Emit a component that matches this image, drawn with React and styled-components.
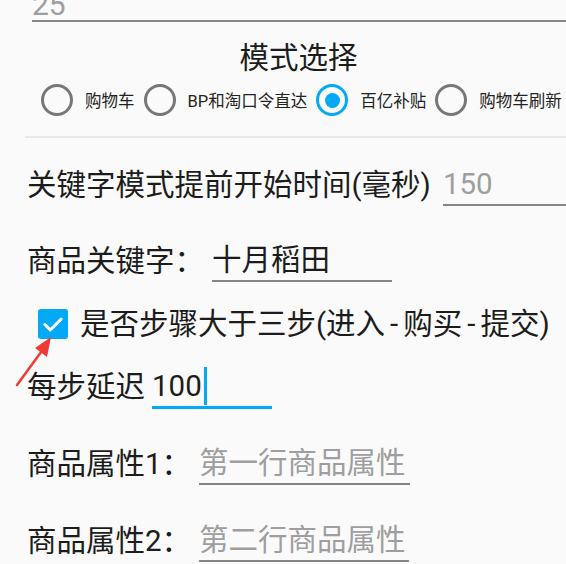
import React from "react";
import styled, { createGlobalStyle } from "styled-components";

const GlobalStyle = createGlobalStyle`
  html, body {
    margin: 0;
    padding: 0;
    background: #fafafa;
  }
  body {
    font-family: Roboto, "Noto Sans CJK SC", sans-serif;
    overflow: hidden;
  }
`;

const Page = styled.div`
  position: relative;
  display: flex;
  flex-direction: column;
  width: 566px;
  height: 564px;
  overflow: hidden;
  padding-left: 27px;
  box-sizing: border-box;
  background: #fafafa;
  color: #212121;
  & > * {
    flex: none;
  }
`;

const TopField = styled.div`
  margin: -20px 0 0 5px;
  height: 40px;
  line-height: 50px;
  font-size: 30px;
  color: #9e9e9e;
  border-bottom: 2px solid #858585;
`;

const Title = styled.h2`
  margin: 18px -4px 0 0;
  text-align: center;
  font-size: 29.5px;
  line-height: 36px;
  font-weight: normal;
  color: #1c1c1c;
`;

const RadioGroup = styled.div`
  display: flex;
  align-items: center;
  gap: 9px;
  margin: 8px 0 0 14px;
  height: 32px;
  white-space: nowrap;
`;

const RadioItem = styled.label`
  display: flex;
  align-items: center;
  gap: 12px;
  font-size: 16.5px;
  color: #222;
`;

const RadioCircle = styled.span`
  flex: none;
  width: 32px;
  height: 32px;
  box-sizing: border-box;
  border-radius: 50%;
  border: 3.5px solid ${(p) => (p.$checked ? "#03a9f4" : "#777")};
  display: flex;
  align-items: center;
  justify-content: center;
  &::after {
    content: "";
    width: 15px;
    height: 15px;
    border-radius: 50%;
    background: #03a9f4;
    display: ${(p) => (p.$checked ? "block" : "none")};
  }
`;

const Divider = styled.div`
  margin: 20px 0 0 -2px;
  height: 2px;
  background: #e8e8e8;
`;

const Row = styled.div`
  display: flex;
  align-items: center;
  gap: ${(p) => p.$gap ?? 8}px;
  margin-top: ${(p) => p.$top}px;
  height: 42px;
  font-size: 29.5px;
  white-space: nowrap;
`;

const Label = styled.span`
  color: #1c1c1c;
  line-height: 40px;
`;

const Dash = styled.span`
  margin: 0 5px;
`;

const Field = styled.div`
  flex: ${(p) => (p.$width ? "none" : "1")};
  width: ${(p) => (p.$width ? `${p.$width}px` : "auto")};
  height: 40px;
  line-height: 40px;
  color: ${(p) => (p.$hint ? "#9e9e9e" : "#1c1c1c")};
  border-bottom: ${(p) => (p.$focused ? "3px solid #03a9f4" : "2px solid #858585")};
  display: flex;
  align-items: center;
`;

const Caret = styled.span`
  width: 3px;
  height: 38px;
  margin-left: 2px;
  background: #03a9f4;
`;

const CheckRow = styled.div`
  display: flex;
  align-items: center;
  gap: 12px;
  margin: 22px 0 0 11px;
  height: 40px;
  font-size: 29.5px;
  white-space: nowrap;
`;

const CheckBox = styled.span`
  flex: none;
  width: 30px;
  height: 30px;
  border-radius: 3px;
  background: #03a9f4;
  display: flex;
  align-items: center;
  justify-content: center;
`;

const Arrow = styled.svg`
  position: absolute;
  left: 0;
  top: 0;
  pointer-events: none;
`;

const modes = ["购物车", "BP和淘口令直达", "百亿补贴", "购物车刷新"];

export default function App() {
  return (
    <>
      <GlobalStyle />
      <Page>
        <TopField>25</TopField>
        <Title>模式选择</Title>
        <RadioGroup>
          {modes.map((m, i) => (
            <RadioItem key={m}>
              <RadioCircle $checked={i === 2} />
              {m}
            </RadioItem>
          ))}
        </RadioGroup>
        <Divider />
        <Row $top={26} $gap={12}>
          <Label>关键字模式提前开始时间(毫秒)</Label>
          <Field $hint>150</Field>
        </Row>
        <Row $top={34}>
          <Label>商品关键字：</Label>
          <Field $width={180}>十月稻田</Field>
        </Row>
        <CheckRow>
          <CheckBox>
            <svg width="26" height="26" viewBox="0 0 24 24">
              <path d="M4.5 12.5l5 5L19.5 7.5" fill="none" stroke="#fff" strokeWidth="2.8" strokeLinecap="round" strokeLinejoin="round" />
            </svg>
          </CheckBox>
          <Label>
            是否步骤大于三步(进入<Dash>-</Dash>购买<Dash>-</Dash>提交)
          </Label>
        </CheckRow>
        <Row $top={22} $gap={7}>
          <Label>每步延迟</Label>
          <Field $width={120} $focused>
            100
            <Caret />
          </Field>
        </Row>
        <Row $top={35}>
          <Label>商品属性1：</Label>
          <Field $width={211} $hint>第一行商品属性</Field>
        </Row>
        <Row $top={35}>
          <Label>商品属性2：</Label>
          <Field $width={210} $hint>第二行商品属性</Field>
        </Row>
        <Arrow width="566" height="564" viewBox="0 0 566 564">
          <line x1="17" y1="385" x2="44" y2="348" stroke="#f03a35" strokeWidth="2.5" strokeLinecap="round" />
          <polygon points="51,337 35,348 47,357" fill="#f03a35" />
        </Arrow>
      </Page>
    </>
  );
}
